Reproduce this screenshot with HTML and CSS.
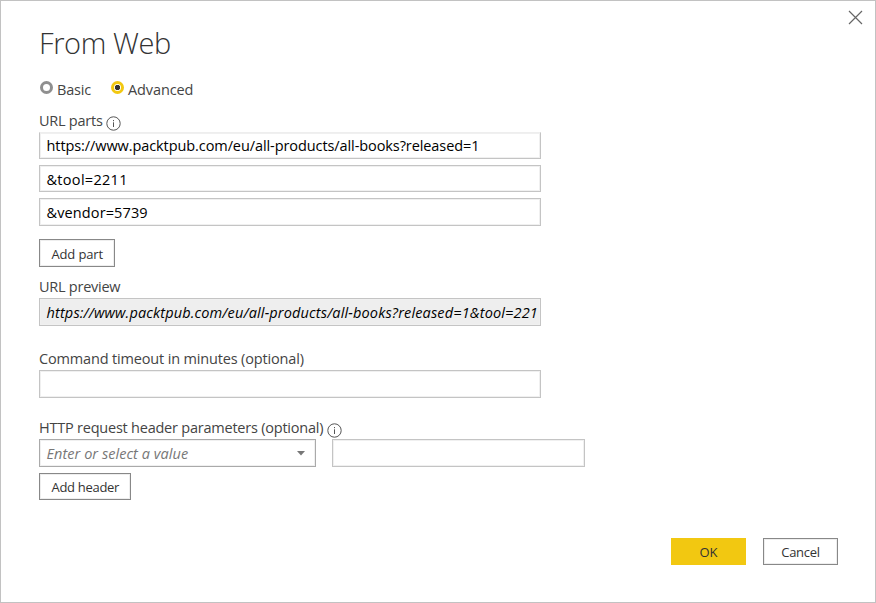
FILE: index.html
```html
<!DOCTYPE html>
<html lang="en">
<head>
<meta charset="utf-8">
<title>From Web</title>
<link rel="stylesheet" href="styles.css">
</head>
<body>
<main class="dialog">
  <svg class="close" width="15" height="15" viewBox="0 0 15 15"><path d="M1 1L14 14M14 1L1 14"/></svg>
  <h1 class="title"><span class="t-title">From Web</span></h1>
  <div class="modes">
    <span class="radio"></span><span class="mode basic t-basic">Basic</span>
    <span class="radio selected"></span><span class="mode t-advanced">Advanced</span>
  </div>
  <div class="label parts-label"><span class="t-parts">URL parts</span>
    <svg class="info" width="15" height="15" viewBox="0 0 15 15"><circle cx="7.5" cy="7.5" r="6.7"/><path d="M7.5 6.3V11M7.5 4V5.2"/></svg>
  </div>
  <div class="parts">
    <div class="field clipped"><span class="t-url">https://www.packtpub.com/eu/all-products/all-books?released=1</span></div>
    <div class="field short"><span class="t-tool">&amp;tool=2211</span></div>
    <div class="field"><span class="t-vendor">&amp;vendor=5739</span></div>
  </div>
  <div class="button add-part"><span class="t-addpart">Add part</span></div>
  <div class="label preview-label"><span class="t-plabel">URL preview</span></div>
  <div class="field preview"><span class="t-preview">https://www.packtpub.com/eu/all-products/all-books?released=1&amp;tool=221</span></div>
  <div class="label timeout-label"><span class="t-timeout">Command timeout in minutes (optional)</span></div>
  <div class="field"></div>
  <div class="label header-label"><span class="t-http">HTTP request header parameters (optional)</span>
    <svg class="info" width="15" height="15" viewBox="0 0 15 15"><circle cx="7.5" cy="7.5" r="6.7"/><path d="M7.5 6.3V11M7.5 4V5.2"/></svg>
  </div>
  <div class="header-row">
    <div class="field select"><span class="t-enter">Enter or select a value</span><svg width="8" height="5" viewBox="0 0 8 5"><path d="M0 0H8L4 4.5Z"/></svg></div>
    <div class="field value"></div>
  </div>
  <div class="button add-header"><span class="t-addheader">Add header</span></div>
  <footer class="actions">
    <div class="button action ok"><span class="t-ok">OK</span></div>
    <div class="button action"><span class="t-cancel">Cancel</span></div>
  </footer>
</main>
</body>
</html>
```
FILE: styles.css
```css
* { box-sizing: border-box; }
body { margin: 0; }
.dialog {
  position: relative;
  width: 876px;
  height: 603px;
  border: 1px solid #c2c2c2;
  padding: 22px 37px 0 38px;
  background: #fff;
  color: #444;
  font: 14.5px/20px "Open Sans", "Noto Sans", sans-serif;
  white-space: nowrap;
}
.close { position: absolute; left: 847px; top: 9px; fill: none; stroke: #666; stroke-width: 1.2; }
.title { margin: 0; height: 40px; font-size: 29px; line-height: 40px; font-weight: 300; color: #333; }
.modes { display: flex; height: 32px; padding: 16px 0 0 1px; }
.radio { width: 13px; height: 13px; margin-top: 2px; border: 3px solid #8f8f8f; border-radius: 50%; background: #fff; }
.radio.selected { border-color: #f2c811; background: radial-gradient(circle, #333 0 2.3px, #fff 3px); }
.mode { margin-left: 4px; line-height: 22px; }
.basic { width: 54px; }
.label { display: flex; }
.parts-label { height: 37px; padding-top: 16px; }
.info { flex: none; margin: 4.5px 0 0 3px; fill: none; stroke: #555; stroke-width: 1; }
.parts { display: flex; flex-direction: column; gap: 6px; }
.field {
  width: 502px;
  height: 28px;
  border: 1px solid #c4c4c4;
  box-shadow: inset 0 0 0 1px #f0f0f0;
  padding-left: 6.5px;
  line-height: 27px;
  color: #000;
  overflow: hidden;
}
.clipped { height: 27px; border-top-color: #eee; line-height: 26px; }
.short { height: 27px; }
.button {
  height: 28px;
  border: 1px solid #888;
  box-shadow: inset 0 0 0 1px #eee;
  padding-left: 11.5px;
  font-size: 13px;
  line-height: 28px;
  color: #333;
}
.add-part { width: 76px; margin-top: 13px; }
.preview-label { height: 31px; padding-top: 10px; }
.preview { background: #eee; font-style: italic; }
.timeout-label { height: 44px; padding-top: 23px; }
.header-label { height: 41px; padding-top: 20px; }
.header-label .info { margin-left: 4px; }
.header-row { display: flex; gap: 16px; }
.select { display: flex; justify-content: space-between; width: 277px; padding-right: 10px; border-color: #aaa; font-style: italic; color: #777; }
.select svg { margin-top: 11px; fill: #777; }
.value { width: 253px; }
.add-header { width: 92px; height: 27px; margin-top: 6px; line-height: 27px; }
.actions { display: flex; justify-content: flex-end; gap: 17px; margin-top: 38px; }
.action { width: 75px; height: 27px; padding: 0; text-align: center; line-height: 27px; }
.ok { border-color: #f2c811; background: #f2c811; box-shadow: none; }

/* Tracking */
.t-title { letter-spacing: -0.4px; }
.t-basic { letter-spacing: -0.2px; }
.t-advanced { letter-spacing: -0.1px; }
.t-parts, .t-plabel { letter-spacing: -0.25px; }
.t-url { letter-spacing: -0.085px; }
.t-tool { letter-spacing: 0.3px; }
.t-vendor { letter-spacing: 0.12px; }
.t-addpart { letter-spacing: -0.15px; }
.t-preview { letter-spacing: 0.15px; }
.t-timeout { letter-spacing: -0.16px; }
.t-http { letter-spacing: -0.225px; }
.t-enter { letter-spacing: 0.05px; }
.t-addheader, .t-cancel { letter-spacing: -0.3px; }
```
